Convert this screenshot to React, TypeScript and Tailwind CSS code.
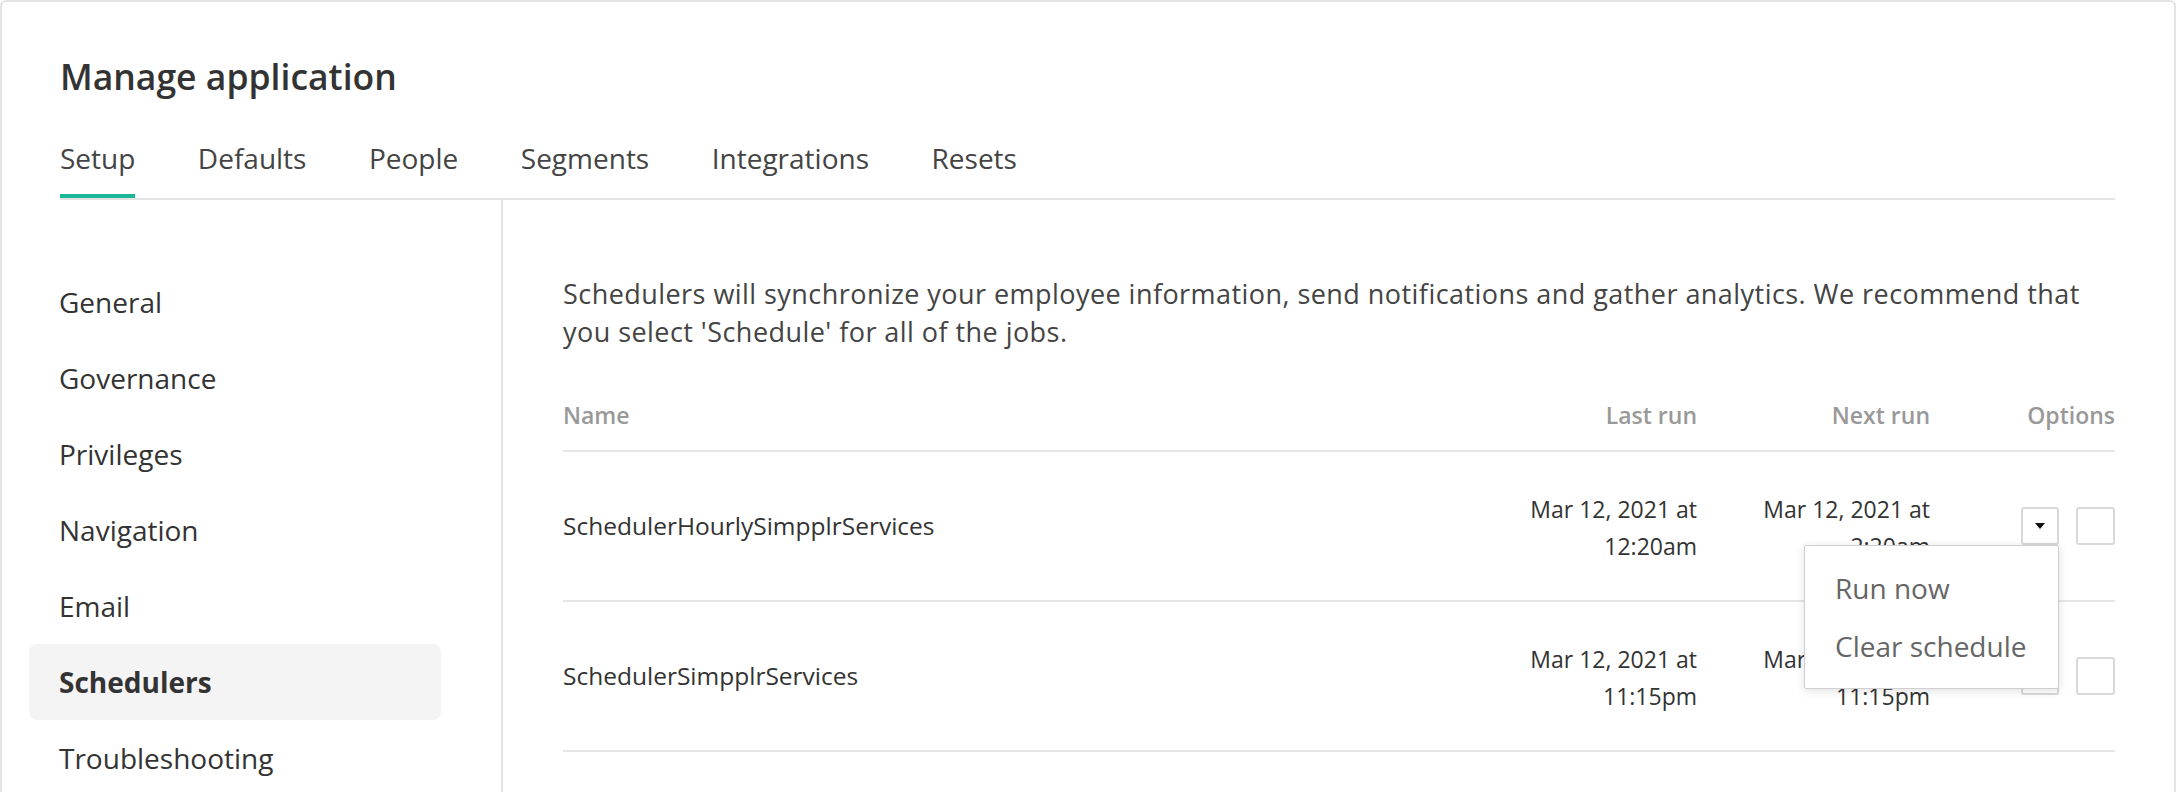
import React from 'react';

const tabs = ['Setup', 'Defaults', 'People', 'Segments', 'Integrations', 'Resets'];
const sections = ['General', 'Governance', 'Privileges', 'Navigation', 'Email', 'Schedulers', 'Troubleshooting'];

const jobs = [
  { name: 'SchedulerHourlySimpplrServices', last: ['Mar 12, 2021 at', '12:20am'], next: ['Mar 12, 2021 at', '2:20am'], open: true },
  { name: 'SchedulerSimpplrServices', last: ['Mar 12, 2021 at', '11:15pm'], next: ['Mar 12, 2021 at', '11:15pm'], open: false },
];

function Caret() {
  return (
    <svg width="10" height="6" viewBox="0 0 10 6">
      <path d="M0 0 L10 0 L5 6 Z" fill="#111" />
    </svg>
  );
}

export default function App() {
  return (
    <div className="w-[2176px] h-[792px] overflow-hidden bg-white font-['Open_Sans',sans-serif] text-[#333]">
      <div className="h-[900px] border-2 border-[#e3e3e3] rounded-[6px]">
        {/* Header */}
        <div className="pl-[58px] pr-[59px] pt-[53px]">
          <h1 className="text-[35.5px] leading-[43px] font-semibold text-[#333]">Manage application</h1>
          <nav className="mt-[40px] flex gap-[62.5px] border-b-2 border-[#e3e3e3]">
            {tabs.map((t, i) => (
              <div
                key={t}
                className={`pb-[16px] text-[28px] leading-[40px] text-[#444] border-b-4 ${
                  i === 0 ? 'border-[#1cb796]' : 'border-transparent'
                }`}
              >
                {t}
              </div>
            ))}
          </nav>
        </div>

        <div className="flex h-full">
          {/* Sidebar */}
          <aside className="w-[501px] shrink-0 border-r-2 border-[#e3e3e3] pl-[27px] pt-[64px]">
            {sections.map((s) => (
              <div
                key={s}
                className={`w-[412px] h-[76px] flex items-center px-[30px] text-[28px] rounded-[8px] ${
                  s === 'Schedulers' ? 'bg-[#f4f4f4] font-bold' : ''
                }`}
              >
                {s}
              </div>
            ))}
          </aside>

          {/* Content */}
          <main className="flex-1 pl-[60px] pr-[59px] pt-[75px]">
            <p className="text-[27px] leading-[38px] tracking-[0.45px] text-[#444]">
              Schedulers will synchronize your employee information, send notifications and gather analytics. We recommend that you select 'Schedule' for all of the jobs.
            </p>

            <div className="mt-[48px]">
              <div className="grid grid-cols-[1fr_220px_233px_185px] pb-[19px] border-b-2 border-[#e6e6e6] text-[23px] leading-[32px] font-semibold text-[#999]">
                <div>Name</div>
                <div className="text-right">Last run</div>
                <div className="text-right">Next run</div>
                <div className="text-right">Options</div>
              </div>

              {jobs.map((j) => (
                <div
                  key={j.name}
                  className="grid grid-cols-[1fr_220px_233px_185px] h-[150px] items-center border-b-2 border-[#e6e6e6]"
                >
                  <div className="text-[24.5px] text-[#333]">{j.name}</div>
                  <div className="text-right text-[23px] leading-[37px] text-[#333] mt-[4px]">
                    <div>{j.last[0]}</div>
                    <div>{j.last[1]}</div>
                  </div>
                  <div className="text-right text-[23px] leading-[37px] text-[#333] mt-[4px]">
                    <div>{j.next[0]}</div>
                    <div>{j.next[1]}</div>
                  </div>
                  <div className="flex justify-end items-center gap-[17px]">
                    <div className="relative">
                      <button className="w-[38px] h-[38px] border-2 border-[#d9d9d9] rounded-[3px] flex items-center justify-center bg-white">
                        <Caret />
                      </button>
                      {j.open && (
                        <div className="absolute right-0 top-full z-10 w-[255px] bg-white border border-[#cfcfcf] rounded-[2px] shadow-[0_2px_10px_rgba(0,0,0,0.12)] pt-[13px] pb-[13px]">
                          <div className="h-[58px] flex items-center pl-[30px] text-[28px] text-[#666]">Run now</div>
                          <div className="h-[58px] flex items-center pl-[30px] text-[28px] text-[#666]">Clear schedule</div>
                        </div>
                      )}
                    </div>
                    <div className="w-[39px] h-[38px] border-2 border-[#d9d9d9] rounded-[3px] bg-white" />
                  </div>
                </div>
              ))}
            </div>
          </main>
        </div>
      </div>
    </div>
  );
}
